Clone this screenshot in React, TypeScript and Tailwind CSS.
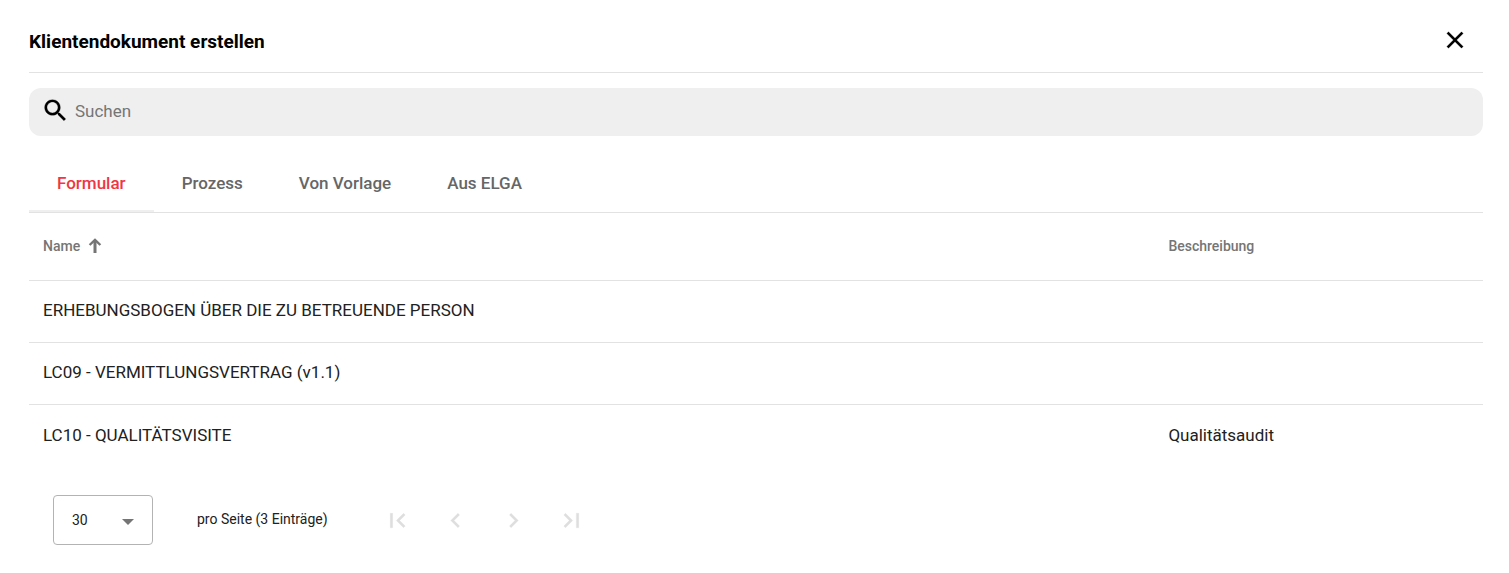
import { useState } from "react";

const tabs = ["Formular", "Prozess", "Von Vorlage", "Aus ELGA"];

const documents = [
  { name: "ERHEBUNGSBOGEN ÜBER DIE ZU BETREUENDE PERSON", description: "" },
  { name: "LC09 - VERMITTLUNGSVERTRAG (v1.1)", description: "" },
  { name: "LC10 - QUALITÄTSVISITE", description: "Qualitätsaudit" },
];

const pagerButtons = [
  { label: "Erste Seite", path: "M18.41 16.59L13.82 12l4.59-4.59L17 6l-6 6 6 6zM6 6h2v12H6z" },
  { label: "Vorherige Seite", path: "M15.41 7.41L14 6l-6 6 6 6 1.41-1.41L10.83 12z" },
  { label: "Nächste Seite", path: "M10 6L8.59 7.41 13.17 12l-4.58 4.59L10 18l6-6z" },
  { label: "Letzte Seite", path: "M5.59 7.41L10.18 12l-4.59 4.59L7 18l6-6-6-6zM16 6h2v12h-2z" },
];

function Icon({ path, className }: { path: string; className: string }) {
  return (
    <svg viewBox="0 0 24 24" fill="currentColor" aria-hidden="true" className={className}>
      <path d={path} stroke="currentColor" strokeWidth="0.2" />
    </svg>
  );
}

function SearchBox() {
  return (
    <label className="mt-[15px] flex h-12 items-center rounded-xl bg-[#efefef] pl-3">
      <Icon
        className="mb-1 size-[29px] shrink-0 text-black"
        path="M15.5 14h-.79l-.28-.27C15.41 12.59 16 11.11 16 9.5 16 5.91 13.09 3 9.5 3S3 5.91 3 9.5 5.91 16 9.5 16c1.61 0 3.09-.59 4.23-1.57l.27.28v.79l5 4.99L20.49 19l-4.99-5zm-6 0C7.01 14 5 11.99 5 9.5S7.01 5 9.5 5 14 7.01 14 9.5 11.99 14 9.5 14z"
      />
      <input
        type="search"
        aria-label="Suchen"
        placeholder="Suchen"
        className="ml-[5px] h-full min-w-0 flex-1 bg-transparent pr-4 pb-0.5 text-[17px] text-black outline-none placeholder:text-[#757575]"
      />
    </label>
  );
}

function Tabs() {
  const [active, setActive] = useState(0);
  return (
    <div role="tablist" className="mt-[18px] flex border-b border-[#e2e2e2]">
      {tabs.map((tab, index) => (
        <button
          key={tab}
          type="button"
          role="tab"
          aria-selected={index === active}
          onClick={() => setActive(index)}
          className={
            index === active
              ? "h-[58px] border-b-2 border-[#efefef] px-7 pt-1 text-[17px] font-medium text-[#f13544]"
              : "h-[58px] border-b-2 border-transparent px-7 pt-1 text-[17px] font-medium text-[#666666]"
          }
        >
          {tab}
        </button>
      ))}
    </div>
  );
}

function DocumentTable() {
  return (
    <table className="w-full table-fixed border-collapse text-left">
      <thead>
        <tr className="h-[67px] border-b border-[#e2e2e2] text-[14px] text-[#757575]">
          <th scope="col" aria-sort="ascending" className="w-[77.4%] px-[14px] font-medium">
            <button type="button" className="flex items-center gap-2">
              Name
              <svg viewBox="0 0 14 16" aria-hidden="true" className="h-4 w-[14px]" fill="none" stroke="currentColor">
                <path d="M7 15V2" strokeWidth="3" />
                <path d="M1.600 7L7 1.800l5.400 5.200" strokeWidth="2.400" />
              </svg>
            </button>
          </th>
          <th scope="col" className="px-[14px] font-medium">
            Beschreibung
          </th>
        </tr>
      </thead>
      <tbody>
        {documents.map((doc) => (
          <tr
            key={doc.name}
            className="h-[62px] border-b border-[#e2e2e2] text-[17px] text-[#212121] last:border-b-0"
          >
            <td className="px-[14px]">{doc.name}</td>
            <td className="px-[14px]">{doc.description}</td>
          </tr>
        ))}
      </tbody>
    </table>
  );
}

function Paginator() {
  return (
    <div className="mt-[29px] flex items-center pl-6 text-[14px] text-[#212121]">
      <div className="relative">
        <select
          id="page-size"
          defaultValue="30"
          className="h-[50px] w-[100px] appearance-none rounded border border-[#b3b3b3] bg-white pl-[18px] text-[14px] text-[#212121]"
        >
          <option>10</option>
          <option>30</option>
          <option>50</option>
        </select>
        <svg
          viewBox="0 0 12 6"
          aria-hidden="true"
          className="pointer-events-none absolute top-6 right-[19px] h-1.5 w-3 text-[#757575]"
          fill="currentColor"
        >
          <path d="M0 0h12L6 6z" />
        </svg>
      </div>
      <label htmlFor="page-size" className="mb-0.5 ml-11">
        pro Seite (3 Einträge)
      </label>
      <nav aria-label="Seiten" className="ml-[41px] flex">
        {pagerButtons.map((button) => (
          <button
            key={button.label}
            type="button"
            disabled
            aria-label={button.label}
            className="flex h-[50px] w-[58px] items-center justify-center text-[#dedede]"
          >
            <Icon className="size-[29px]" path={button.path} />
          </button>
        ))}
      </nav>
    </div>
  );
}

export default function App() {
  return (
    <main className="bg-white pt-3 pr-[26px] pb-7 pl-[29px] font-[Roboto,sans-serif]">
      <header className="flex h-[61px] items-center justify-between border-b border-[#e2e2e2] pr-[14px]">
        <h1 className="text-[19px] font-bold text-black">Klientendokument erstellen</h1>
        <button type="button" aria-label="Schließen" className="mb-1 text-black">
          <Icon
            className="size-7"
            path="M19 6.41L17.59 5 12 10.59 6.41 5 5 6.41 10.59 12 5 17.59 6.41 19 12 13.41 17.59 19 19 17.59 13.41 12z"
          />
        </button>
      </header>
      <SearchBox />
      <Tabs />
      <DocumentTable />
      <Paginator />
    </main>
  );
}
